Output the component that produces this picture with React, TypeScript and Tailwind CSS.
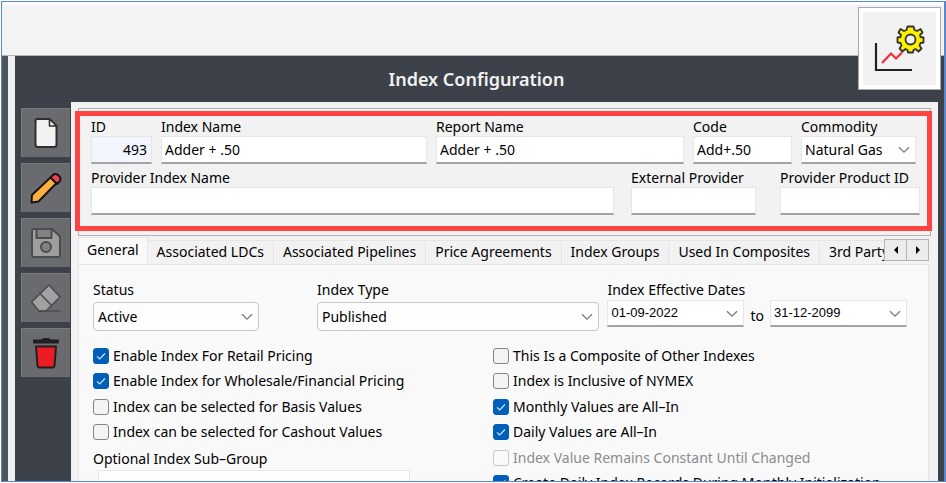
import { useState, type ReactNode } from "react";

function Chevron() {
  return (
    <svg viewBox="0 0 12 8" className="pointer-events-none absolute top-1/2 right-1.5 h-2 w-3 -translate-y-1/2" fill="none" stroke="#7b7b7b" strokeWidth="1.3" aria-hidden="true">
      <path d="M1 1.2 6 6.2 11 1.2" />
    </svg>
  );
}

const boxed = "block h-7 w-full border border-[#e6e6e6] border-b-2 border-b-[#a3a3a3] bg-white px-[3px] outline-none";

type FieldProps = { id: string; label: string; value?: string; readOnly?: boolean; className: string };

function Field({ id, label, value = "", readOnly = false, className }: FieldProps) {
  return (
    <div className={className}>
      <label htmlFor={id} className="block leading-[18px] whitespace-nowrap">{label}</label>
      <input
        id={id}
        type="text"
        defaultValue={value}
        readOnly={readOnly}
        className={readOnly ? "block h-7 w-full border border-[#e6e6e6] border-b-2 border-b-[#a3a3a3] bg-[#f2f6fc] px-1 text-right outline-none" : boxed}
      />
    </div>
  );
}

type PickProps = { id: string; label: string; options: string[]; className: string };

function Pick({ id, label, options, className }: PickProps) {
  return (
    <div className={className}>
      <label htmlFor={id} className="block leading-[18px]">{label}</label>
      <div className="relative mt-[3px]">
        <select id={id} className="block h-[29px] w-full appearance-none rounded border border-[#c8c8c8] bg-[#fdfdfd] px-1 outline-none">
          {options.map((o) => <option key={o}>{o}</option>)}
        </select>
        <Chevron />
      </div>
    </div>
  );
}

function DateBox({ label, value }: { label: string; value: string }) {
  return (
    <div className="relative w-[137px]">
      <input
        aria-label={label}
        type="text"
        defaultValue={value}
        className="block h-[27px] w-full border border-[#e6e6e6] border-b-2 border-b-[#a3a3a3] bg-white px-[3px] pb-0.5 font-['Liberation_Sans',sans-serif] text-[13px] outline-none"
      />
      <Chevron />
    </div>
  );
}

type CheckProps = { label: string; checked?: boolean; disabled?: boolean };

function Check({ label, checked = false, disabled = false }: CheckProps) {
  return (
    <label className={disabled ? "flex h-4 items-center gap-1 whitespace-nowrap text-[#8c8c8c]" : "flex h-4 items-center gap-1 whitespace-nowrap"}>
      <span className="relative block size-4 shrink-0">
        <input
          type="checkbox"
          defaultChecked={checked}
          disabled={disabled}
          className="peer block size-4 appearance-none rounded-[3px] border border-[#858585] bg-[#f3f3f3] checked:border-[#005fb8] checked:bg-[#005fb8] disabled:border-[#c8c8c8] disabled:bg-[#fafafa]"
        />
        <svg viewBox="0 0 16 16" className="pointer-events-none absolute inset-0 hidden size-4 peer-checked:block" fill="none" stroke="#d5e6f6" strokeWidth="1.1" aria-hidden="true">
          <path d="M4 8.3 6.7 11 12 5.5" />
        </svg>
      </span>
      {label}
    </label>
  );
}

function Tool({ label, children }: { label: string; children: ReactNode }) {
  return (
    <button type="button" aria-label={label} className="flex size-[49px] items-center justify-center border-t border-l border-[#7a7b7e] bg-[#6a6b6e]">
      {children}
    </button>
  );
}

function Sidebar() {
  return (
    <nav className="flex w-14 shrink-0 flex-col items-end gap-1.5 pt-1.5 pr-px">
      <Tool label="New">
        <svg viewBox="0 0 32 32" className="size-8" fill="#f2f2f2" stroke="#2e2e2e" strokeWidth="2" strokeLinejoin="round">
          <path d="M7.500 2H19.500l7 7v18.500a2.500 2.500 0 0 1-2.500 2.500H8a2.500 2.500 0 0 1-2.500-2.500V4A2 2 0 0 1 7.500 2Z" />
          <path d="M19.500 2v7h7Z" strokeWidth="1.600" />
        </svg>
      </Tool>
      <Tool label="Edit">
        <svg viewBox="0 0 32 32" className="size-8" stroke="#151515" strokeWidth="2" strokeLinejoin="round">
          <path d="M1.500 30.500 2 23 20.500 5.500 26.500 11 8.500 29.500Z" fill="#ffb140" />
          <path d="M20.500 5.500 23 3a3.500 3.500 0 0 1 5 0l1.500 1.500a3.500 3.500 0 0 1 0 5L27 12Z" fill="#f2405a" />
        </svg>
      </Tool>
      <Tool label="Save">
        <svg viewBox="0 0 32 32" className="size-8" fill="#9d9ea0" stroke="#4b4c4e" strokeWidth="2" strokeLinejoin="round">
          <path d="M4 2h18l8 7.500V28a2 2 0 0 1-2 2H4a2 2 0 0 1-2-2V4a2 2 0 0 1 2-2Z" />
          <path d="M6.500 2h15v9h-15Z" fill="#818284" />
          <circle cx="16" cy="20" r="5" fill="#818284" />
        </svg>
      </Tool>
      <Tool label="Clear">
        <svg viewBox="0 0 32 32" className="size-8" fill="#a0a1a3" stroke="#4b4c4e" strokeWidth="1.600" strokeLinejoin="round" strokeLinecap="round">
          <path d="M19 3 30 15 16 29H9L1.500 20Z" />
          <path d="M10 11.500 21.500 23.500M9 29H30" />
        </svg>
      </Tool>
      <Tool label="Delete">
        <svg viewBox="0 0 32 32" className="size-8" fill="#ed1c24" stroke="#231f20" strokeWidth="2" strokeLinejoin="round">
          <path d="M6 9.500h20L24.500 29a2 2 0 0 1-2 1.500h-13A2 2 0 0 1 7.500 29Z" />
          <path d="M3.500 3h8l1.500-1.500h6l1.500 1.500h8v3h-25Z" fill="#231f20" strokeWidth="1" />
        </svg>
      </Tool>
    </nav>
  );
}

function IndexBadge() {
  return (
    <div className="absolute top-[5px] right-[3px] size-[83px] border border-[#a8a8a8] bg-white p-1">
      <svg viewBox="0 0 73 73" className="size-full bg-[#f2f2f2]" fill="none">
        <path d="M13 31v27h36" stroke="#222" strokeWidth="2.200" />
        <path d="M19 51 28 41.500 33 46.500 39 40.500" stroke="#ee2e38" strokeWidth="2.200" />
        <g transform="translate(47.500 27.500)" fill="#fff200" stroke="#333" strokeWidth="1.800" strokeLinejoin="round">
          <path d="M-3-13H3L4-9.500 6.500-8.500 10-10.500 12-7 9.500-4.500 10-2.500 13-2V3L10 3.500 9 6 11 9 8 12 5 9.500 3 10.500 2.500 13H-2.500L-3 10.500-5 9.500-8 12-11 9-9 6-10 3.500-13 3V-2L-10-2.500-9.500-4.500-12-7-10-10.500-6.500-8.500-4-9.500Z" />
          <circle r="5" fill="#f2f2f2" />
        </g>
      </svg>
    </div>
  );
}

const tabs = ["General", "Associated LDCs", "Associated Pipelines", "Price Agreements", "Index Groups", "Used In Composites", "3rd Party"];

function TabStrip() {
  const [active, setActive] = useState("General");
  return (
    <div className="flex h-[27px] items-start">
      <div role="tablist" className="flex h-full min-w-0 flex-1 items-end overflow-hidden">
        {tabs.map((t) => (
          <button
            key={t}
            type="button"
            role="tab"
            aria-selected={t === active}
            onClick={() => setActive(t)}
            className={
              t === active
                ? "h-[27px] shrink-0 border border-b-0 border-[#e6e6e6] bg-[#f9f9f9] px-2 pb-0.5 whitespace-nowrap"
                : "h-6 shrink-0 border-t border-r border-[#e6e6e6] bg-[#f2f2f2] px-[9px] pb-0.5 whitespace-nowrap"
            }
          >
            {t}
          </button>
        ))}
      </div>
      <div className="mt-0.5 mr-0.5 flex">
        <button type="button" aria-label="Scroll tabs left" className="flex h-[22px] w-[23px] items-center justify-center border border-[#b4b4b4] bg-[#ececec]">
          <svg viewBox="0 0 4 8" className="h-2 w-1"><path d="M4 0v8L0 4Z" /></svg>
        </button>
        <button type="button" aria-label="Scroll tabs right" className="-ml-px flex h-[22px] w-[23px] items-center justify-center border border-[#b4b4b4] bg-[#ececec]">
          <svg viewBox="0 0 4 8" className="h-2 w-1"><path d="M0 0v8l4-4Z" /></svg>
        </button>
      </div>
    </div>
  );
}

function IdentityBox() {
  return (
    <section className="relative border border-[#b0b0b0] pt-[9px] pr-2.5 pb-5 pl-3">
      <div className="flex gap-[9px] pr-1">
        <Field id="id" label="ID" value="493" readOnly className="w-[61px]" />
        <Field id="name" label="Index Name" value="Adder + .50" className="min-w-0 flex-[266]" />
        <Field id="report" label="Report Name" value="Adder + .50" className="min-w-0 flex-[248]" />
        <Field id="code" label="Code" value="Add+.50" className="w-[99px]" />
        <div className="w-[115px]">
          <label htmlFor="commodity" className="block leading-[18px]">Commodity</label>
          <div className="relative">
            <select id="commodity" className="block h-7 w-full appearance-none border border-[#e6e6e6] border-b-2 border-b-[#a3a3a3] bg-white px-[3px] outline-none">
              <option>Natural Gas</option>
            </select>
            <Chevron />
          </div>
        </div>
      </div>
      <div className="mt-[5px] flex">
        <Field id="provider-name" label="Provider Index Name" className="min-w-0 flex-1" />
        <Field id="provider" label="External Provider" className="ml-[17px] w-[125px]" />
        <Field id="product" label="Provider Product ID" className="ml-6 w-[140px]" />
      </div>
      <div className="pointer-events-none absolute top-0.5 -right-0.5 bottom-1 -left-1 border-[5px] border-[#ff4242]" />
    </section>
  );
}

function GeneralPage() {
  return (
    <div role="tabpanel" className="mr-0.5 flex-1 border border-[#e6e6e6] bg-[#f9f9f9] pt-4 pr-[21px] pl-3.5">
      <div className="flex">
        <Pick id="status" label="Status" options={["Active", "Inactive"]} className="w-[166px]" />
        <Pick id="type" label="Index Type" options={["Published", "Calculated"]} className="ml-[58px] min-w-0 flex-1" />
        <div className="ml-2">
          <div className="leading-[18px]">Index Effective Dates</div>
          <div className="mt-px flex items-center gap-1.5">
            <DateBox label="Effective from" value="01-09-2022" />
            <span className="pt-1">to</span>
            <DateBox label="Effective to" value="31-12-2099" />
          </div>
        </div>
      </div>
      <div className="mt-[17px] flex">
        <div className="flex w-[400px] flex-col gap-2.5">
          <div className="flex flex-col gap-[9px]">
            <Check label="Enable Index For Retail Pricing" checked />
            <Check label="Enable Index for Wholesale/Financial Pricing" checked />
          </div>
          <div className="flex flex-col gap-[9px]">
            <Check label="Index can be selected for Basis Values" />
            <Check label="Index can be selected for Cashout Values" />
          </div>
          <div>
            <label htmlFor="subgroup" className="block">Optional Index Sub–Group</label>
            <input id="subgroup" type="text" className="mt-0.5 ml-[5px] block h-7 w-[312px] border border-[#e6e6e6] bg-white px-1 outline-none" />
          </div>
        </div>
        <div className="flex min-w-0 flex-1 flex-col gap-2.5">
          <div className="flex flex-col gap-[9px]">
            <Check label="This Is a Composite of Other Indexes" />
            <Check label="Index is Inclusive of NYMEX" />
          </div>
          <div className="flex flex-col gap-[9px]">
            <Check label="Monthly Values are All–In" checked />
            <Check label="Daily Values are All–In" checked />
          </div>
          <div className="flex flex-col gap-[9px]">
            <Check label="Index Value Remains Constant Until Changed" disabled />
            <Check label="Create Daily Index Records During Monthly Initialization" checked />
          </div>
        </div>
      </div>
    </div>
  );
}

export default function App() {
  return (
    <div className="h-screen overflow-hidden bg-white pt-px pb-px pl-px font-['Noto_Sans',sans-serif] text-[14px] leading-[18px] text-black">
      <div className="relative flex h-full flex-col overflow-hidden border border-r-2 border-[#5b87d0]">
        <div className="h-[54px] shrink-0 border-t-[3px] border-b border-t-white border-b-[#b4b4b4] bg-[#f3f3f3]" />
        <div className="flex min-h-0 flex-1 bg-[#f0f0f0]">
          <div className="w-1.5 shrink-0 bg-[#4d545e]" />
          <main className="ml-[7px] flex min-w-0 flex-1 flex-col bg-[#3d4149] pr-1.5">
            <h1 className="flex h-[46px] shrink-0 items-center justify-center text-lg font-semibold text-[#f2f2f2]">Index Configuration</h1>
            <div className="flex min-h-0 flex-1">
              <Sidebar />
              <div className="flex min-w-0 flex-1 flex-col bg-[#f2f2f2] px-[7px] pt-1.5">
                <IdentityBox />
                <div className="mt-px flex flex-1 flex-col">
                  <TabStrip />
                  <GeneralPage />
                </div>
              </div>
            </div>
          </main>
        </div>
        <IndexBadge />
      </div>
    </div>
  );
}
